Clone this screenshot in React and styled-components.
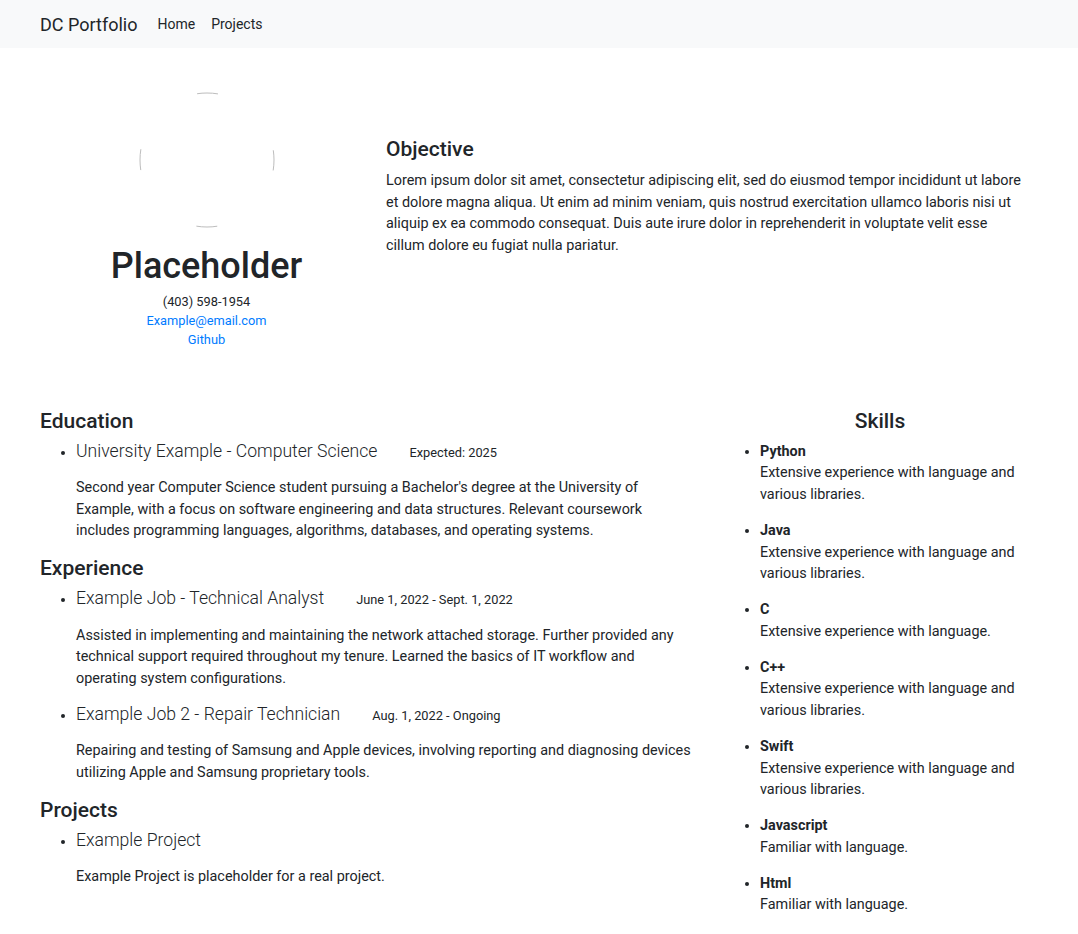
import React from "react";
import styled, { createGlobalStyle } from "styled-components";

const GlobalStyle = createGlobalStyle`
  *, *::before, *::after { box-sizing: border-box; }
  body {
    margin: 0;
    font-family: Roboto, "Liberation Sans", sans-serif;
    color: #212529;
    background: #ffffff;
  }
`;

const Nav = styled.nav`
  display: flex;
  align-items: center;
  height: 48px;
  padding: 0 40px;
  background: #f8f9fa;
`;

const Brand = styled.a`
  font-size: 18px;
  color: #212529;
  text-decoration: none;
  margin-right: 20px;
`;

const NavLinks = styled.div`
  display: flex;
  gap: 16px;
`;

const NavLink = styled.a`
  font-size: 14px;
  color: #212529;
  text-decoration: none;
`;

const Main = styled.main`
  padding: 45px 40px 0;
`;

const TopRow = styled.section`
  display: grid;
  grid-template-columns: 333px 1fr;
  column-gap: 13px;
`;

const Profile = styled.div`
  display: flex;
  flex-direction: column;
  align-items: center;
  text-align: center;
`;

const AvatarFrame = styled.svg`
  display: block;
  width: 136px;
  height: 136px;
  margin-top: -1px;
`;

const Name = styled.h1`
  margin: 16.8px 0 3.8px;
  font-size: 36px;
  font-weight: 500;
  line-height: 1.2;
`;

const ContactLine = styled.a`
  display: block;
  font-size: 12.8px;
  line-height: 19.2px;
  color: ${(p) => (p.$link ? "#007bff" : "#212529")};
  text-decoration: none;
`;

const ObjectiveBlock = styled.div`
  padding: 43.8px 14px 0 0;
`;

const Heading = styled.h2`
  margin: 0 0 8px;
  font-size: 21px;
  font-weight: 500;
  line-height: 1.2;
  text-align: ${(p) => (p.$center ? "center" : "left")};
`;

const SectionHeading = styled(Heading)`
  margin-bottom: 6.5px;
`;

const Paragraph = styled.p`
  margin: 0;
  font-size: 14.4px;
  line-height: 1.5;
`;

const BottomRow = styled.section`
  display: grid;
  grid-template-columns: 655px 1fr;
  column-gap: 27px;
  margin-top: 59.6px;
`;

const Section = styled.div``;

const ItemList = styled.ul`
  margin: 0;
  padding-left: 36px;
  list-style: disc;
`;

const Item = styled.li`
  font-size: 14.4px;
  line-height: 1.5;
`;

const ItemTitle = styled.div`
  font-size: 17.6px;
  font-weight: 300;
  line-height: 1.2;
  margin-bottom: 15.4px;
`;

const ItemDate = styled.span`
  margin-left: 32px;
  font-size: 12.8px;
  font-weight: 400;
`;

const ItemText = styled(Paragraph)`
  margin-bottom: 14.4px;
`;

const SkillList = styled.ul`
  margin: 1px 0 0;
  padding-left: 38px;
  list-style: disc;
`;

const SkillItem = styled.li`
  font-size: 14.4px;
  line-height: 1.5;
  margin-bottom: 14.4px;
`;

const SkillName = styled.strong`
  display: block;
  font-weight: 700;
`;

function Avatar() {
  return (
    <AvatarFrame viewBox="0 0 136 136" aria-hidden="true">
      <circle
        cx="68"
        cy="68"
        r="67"
        fill="none"
        stroke="#bdbdbd"
        strokeWidth="1"
        strokeDasharray="21 84.25"
        strokeDashoffset="10.5"
      />
    </AvatarFrame>
  );
}

const education = [
  {
    title: "University Example - Computer Science",
    date: "Expected: 2025",
    text:
      "Second year Computer Science student pursuing a Bachelor's degree at the University of Example, with a focus on software engineering and data structures. Relevant coursework includes programming languages, algorithms, databases, and operating systems.",
  },
];

const experience = [
  {
    title: "Example Job - Technical Analyst",
    date: "June 1, 2022 - Sept. 1, 2022",
    text:
      "Assisted in implementing and maintaining the network attached storage. Further provided any technical support required throughout my tenure. Learned the basics of IT workflow and operating system configurations.",
  },
  {
    title: "Example Job 2 - Repair Technician",
    date: "Aug. 1, 2022 - Ongoing",
    text:
      "Repairing and testing of Samsung and Apple devices, involving reporting and diagnosing devices utilizing Apple and Samsung proprietary tools.",
  },
];

const projects = [
  {
    title: "Example Project",
    text: "Example Project is placeholder for a real project.",
  },
];

const skills = [
  ["Python", "Extensive experience with language and various libraries."],
  ["Java", "Extensive experience with language and various libraries."],
  ["C", "Extensive experience with language."],
  ["C++", "Extensive experience with language and various libraries."],
  ["Swift", "Extensive experience with language and various libraries."],
  ["Javascript", "Familiar with language."],
  ["Html", "Familiar with language."],
];

function ResumeSection({ title, items }) {
  return (
    <Section>
      <SectionHeading>{title}</SectionHeading>
      <ItemList>
        {items.map((it) => (
          <Item key={it.title}>
            <ItemTitle>
              {it.title}
              {it.date && <ItemDate>{it.date}</ItemDate>}
            </ItemTitle>
            <ItemText>{it.text}</ItemText>
          </Item>
        ))}
      </ItemList>
    </Section>
  );
}

export default function App() {
  return (
    <>
      <GlobalStyle />
      <Nav>
        <Brand href="#">DC Portfolio</Brand>
        <NavLinks>
          <NavLink href="#">Home</NavLink>
          <NavLink href="#">Projects</NavLink>
        </NavLinks>
      </Nav>
      <Main>
        <TopRow>
          <Profile>
            <Avatar />
            <Name>Placeholder</Name>
            <ContactLine as="div">(403) 598-1954</ContactLine>
            <ContactLine $link href="#">Example@email.com</ContactLine>
            <ContactLine $link href="#">Github</ContactLine>
          </Profile>
          <ObjectiveBlock>
            <Heading>Objective</Heading>
            <Paragraph>
              Lorem ipsum dolor sit amet, consectetur adipiscing elit, sed do eiusmod tempor
              incididunt ut labore et dolore magna aliqua. Ut enim ad minim veniam, quis nostrud
              exercitation ullamco laboris nisi ut aliquip ex ea commodo consequat. Duis aute irure
              dolor in reprehenderit in voluptate velit esse cillum dolore eu fugiat nulla pariatur.
            </Paragraph>
          </ObjectiveBlock>
        </TopRow>
        <BottomRow>
          <div>
            <ResumeSection title="Education" items={education} />
            <ResumeSection title="Experience" items={experience} />
            <ResumeSection title="Projects" items={projects} />
          </div>
          <div>
            <SectionHeading $center>Skills</SectionHeading>
            <SkillList>
              {skills.map(([name, desc]) => (
                <SkillItem key={name}>
                  <SkillName>{name}</SkillName>
                  {desc}
                </SkillItem>
              ))}
            </SkillList>
          </div>
        </BottomRow>
      </Main>
    </>
  );
}
